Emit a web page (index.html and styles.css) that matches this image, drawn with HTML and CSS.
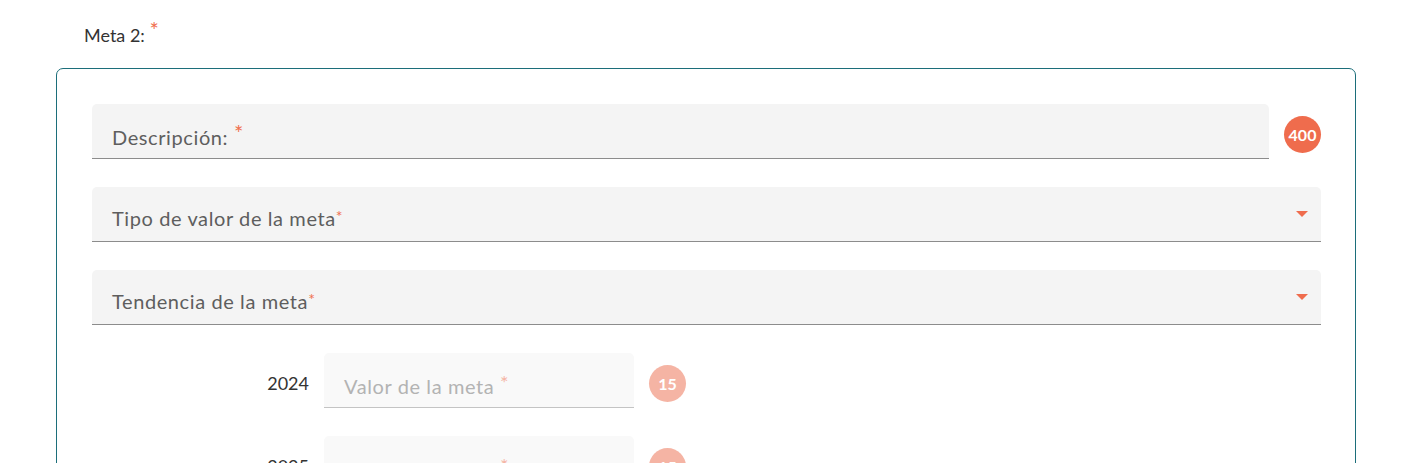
FILE: index.html
```html
<!DOCTYPE html>
<html lang="es">
<head>
<meta charset="utf-8">
<title>Meta 2</title>
<link rel="stylesheet" href="styles.css">
</head>
<body>
<div class="page">
  <div class="meta-title">Meta 2: <span class="req-top">*</span></div>
  <div class="meta-box">
    <div class="row-desc">
      <div class="field field-desc">
        <span class="field-label">Descripción: <span class="req-top">*</span></span>
      </div>
      <span class="badge">400</span>
    </div>
    <div class="field field-select">
      <span class="field-label">Tipo de valor de la meta<span class="req">*</span></span>
      <span class="arrow"></span>
    </div>
    <div class="field field-select">
      <span class="field-label">Tendencia de la meta<span class="req">*</span></span>
      <span class="arrow"></span>
    </div>
    <div class="year-row">
      <span class="year">2024</span>
      <div class="field field-year">
        <span class="placeholder">Valor de la meta <span class="req-light">*</span></span>
      </div>
      <span class="badge badge-light">15</span>
    </div>
    <div class="year-row">
      <span class="year">2025</span>
      <div class="field field-year">
        <span class="placeholder">Valor de la meta <span class="req-light">*</span></span>
      </div>
      <span class="badge badge-light">15</span>
    </div>
  </div>
</div>
</body>
</html>
```
FILE: styles.css
```css
* { box-sizing: border-box; }
html, body { margin: 0; padding: 0; background: #fff; }
body { font-family: Lato, "Open Sans", sans-serif; overflow: hidden; height: 463px; }
.page { padding-top: 24px; }
.meta-title {
  font-size: 18px;
  line-height: 22px;
  color: #333;
  padding-left: 84px;
  height: 44px;
}
.req-top {
  color: #f0704f;
  font-size: 22px;
  line-height: 0;
  position: relative;
  top: -4px;
}
.req { color: #f0704f; font-size: 16px; position: relative; top: -4px; }
.req-light { color: #f5b5a5; font-size: 20px; line-height: 0; position: relative; top: -4px; }
.meta-box {
  margin-left: 56px;
  width: 1300px;
  border: 1px solid #1c6e7a;
  border-radius: 7px;
  padding: 35px 34px 40px 35px;
  display: flex;
  flex-direction: column;
  gap: 28px;
}
.field {
  position: relative;
  background: #f4f4f4;
  border-radius: 5px 5px 0 0;
  border-bottom: 1px solid #8c8c8c;
  height: 55px;
  padding-left: 20px;
}
.field-label {
  display: block;
  font-size: 20px;
  line-height: 24px;
  color: #5e5e5e;
  letter-spacing: 0.6px;
}
.field-desc .field-label { padding-top: 21px; }
.field-select .field-label { padding-top: 19px; }
.row-desc { display: flex; align-items: flex-start; gap: 15px; }
.field-desc { flex: 1; }
.badge {
  width: 37px;
  height: 37px;
  border-radius: 50%;
  background: #ef6c4d;
  color: #fff;
  font-weight: 700;
  font-size: 16px;
  display: flex;
  align-items: center;
  justify-content: center;
  flex: none;
  margin-top: 12px;
}
.badge-light { background: #f5b4a4; }
.arrow {
  position: absolute;
  right: 13px;
  top: 24px;
  width: 0;
  height: 0;
  border-left: 6px solid transparent;
  border-right: 6px solid transparent;
  border-top: 6px solid #ef6c4d;
}
.year-row { display: flex; align-items: flex-start; gap: 15px; }
.year {
  width: 217px;
  text-align: right;
  font-size: 18px;
  line-height: 22px;
  color: #333;
  padding-top: 19px;
}
.field-year {
  width: 310px;
  background: #f9f9f9;
  border-bottom: 1px solid #c4c4c4;
  flex: none;
}
.placeholder {
  display: block;
  padding-top: 21px;
  font-size: 20px;
  line-height: 24px;
  color: #b3b3b3;
  letter-spacing: 0.6px;
}
```
